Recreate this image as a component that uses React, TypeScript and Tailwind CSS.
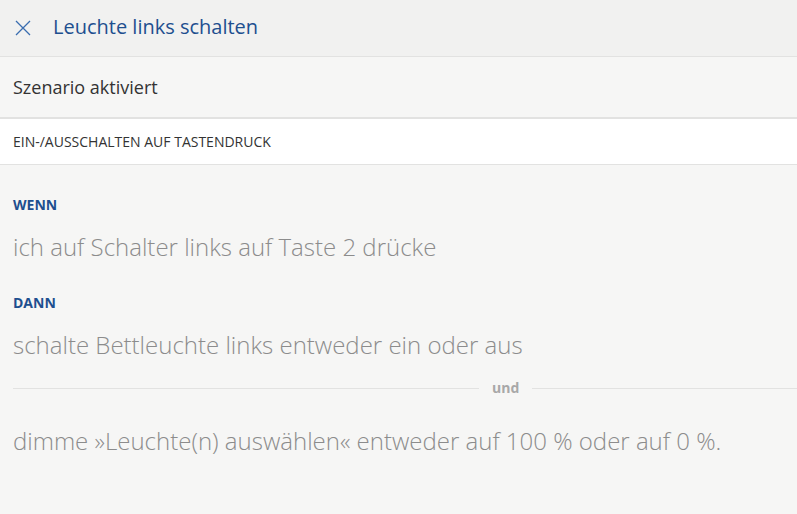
import React from "react";

export default function App() {
  return (
    <div className="w-[797px] h-[514px] bg-[#f6f6f5] overflow-hidden" style={{ fontFamily: '"Open Sans", sans-serif' }}>
      <div className="h-[57px] bg-[#f1f1f0] border-b border-[#e2e2e1] flex items-center">
        <svg className="ml-[14px]" width="18" height="18" viewBox="0 0 18 18">
          <path d="M2 2 L16 16 M16 2 L2 16" stroke="#3a6db0" strokeWidth="1.3" fill="none" />
        </svg>
        <div className="ml-[21px] text-[20px] text-[#1e4f8f] leading-none pb-[2px]">Leuchte links schalten</div>
      </div>
      <div className="h-[62px] bg-[#f6f6f5] border-b-2 border-[#e2e2e1] flex items-center px-[13px]">
        <span className="text-[18px] text-[#333]">Szenario aktiviert</span>
      </div>
      <div className="h-[46px] bg-white border-b border-[#e2e2e1] flex items-center px-[13px]">
        <span className="text-[14px] text-[#333] uppercase">Ein-/Ausschalten auf Tastendruck</span>
      </div>
      <div className="px-[13px] pt-[30px]">
        <div className="text-[14px] font-bold text-[#1e4f8f] leading-[20px]">WENN</div>
        <div className="mt-[17px] text-[24px] font-light text-[#8c8c8c] leading-[30px]">ich auf Schalter links auf Taste 2 drücke</div>
        <div className="mt-[31px] text-[14px] font-bold text-[#1e4f8f] leading-[20px]">DANN</div>
        <div className="mt-[17px] text-[24px] font-light text-[#8c8c8c] leading-[30px]">schalte Bettleuchte links entweder ein oder aus</div>
        <div className="mt-[18px] flex items-center mr-[-13px]">
          <div className="w-[466px] h-px bg-[#e2e2e1]" />
          <span className="px-[13px] text-[14px] font-bold text-[#a8a8a8] leading-[20px]">und</span>
          <div className="flex-1 h-px bg-[#e2e2e1]" />
        </div>
        <div className="mt-[28px] text-[24px] font-light text-[#8c8c8c] leading-[30px]">dimme »Leuchte(n) auswählen« entweder auf 100 % oder auf 0 %.</div>
      </div>
    </div>
  );
}
